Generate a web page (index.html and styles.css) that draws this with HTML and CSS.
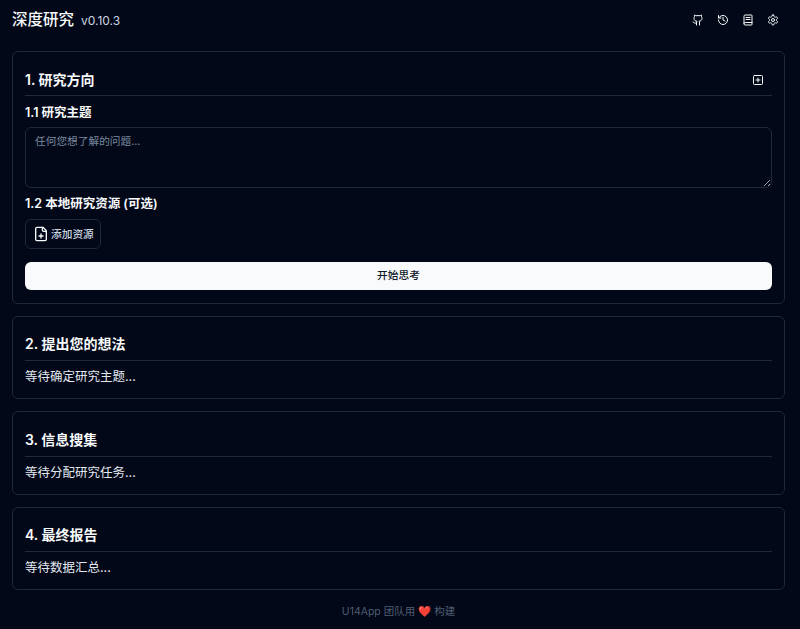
FILE: index.html
```html
<!DOCTYPE html>
<html lang="zh">
<head>
<meta charset="utf-8">
<title>深度研究</title>
<link rel="stylesheet" href="styles.css">
</head>
<body>
<div class="page">
  <header class="topbar">
    <h1 class="brand">深度研究<small class="version">v0.10.3</small></h1>
    <div class="tools">
      <svg class="icon" viewBox="0 0 24 24"><path d="M15 22v-4a4.8 4.8 0 0 0-1-3.5c3 0 6-2 6-5.500.08-1.250-.27-2.480-1-3.500.28-1.150.28-2.350 0-3.500 0 0-1 0-3 1.500-2.640-.5-5.360-.5-8 0C6 2 5 2 5 2c-.3 1.150-.3 2.350 0 3.500A5.400 5.400 0 0 0 4 9c0 3.500 3 5.500 6 5.500-.39.490-.68 1.050-.85 1.650-.17.600-.22 1.230-.15 1.850v4"/><path d="M9 18c-4.510 2-5-2-7-2"/></svg>
      <svg class="icon" viewBox="0 0 24 24"><path d="M3 12a9 9 0 1 0 9-9 9.750 9.750 0 0 0-6.740 2.740L3 8"/><path d="M3 3v5h5"/><path d="M12 7v5l4 2"/></svg>
      <svg class="icon" viewBox="0 0 24 24"><path d="M4 19.500v-15A2.500 2.500 0 0 1 6.500 2H19a1 1 0 0 1 1 1v18a1 1 0 0 1-1 1H6.500a1 1 0 0 1 0-5H20"/><path d="M8 7h8"/><path d="M8 11h8"/></svg>
      <svg class="icon" viewBox="0 0 24 24"><path d="M12.220 2h-.44a2 2 0 0 0-2 2v.18a2 2 0 0 1-1 1.730l-.43.250a2 2 0 0 1-2 0l-.15-.08a2 2 0 0 0-2.730.73l-.22.380a2 2 0 0 0 .73 2.730l.15.100a2 2 0 0 1 1 1.720v.510a2 2 0 0 1-1 1.740l-.15.090a2 2 0 0 0-.73 2.730l.22.380a2 2 0 0 0 2.730.730l.15-.08a2 2 0 0 1 2 0l.43.250a2 2 0 0 1 1 1.730V20a2 2 0 0 0 2 2h.44a2 2 0 0 0 2-2v-.18a2 2 0 0 1 1-1.730l.43-.250a2 2 0 0 1 2 0l.15.080a2 2 0 0 0 2.730-.730l.22-.390a2 2 0 0 0-.73-2.730l-.15-.080a2 2 0 0 1-1-1.740v-.500a2 2 0 0 1 1-1.740l.15-.090a2 2 0 0 0 .73-2.730l-.22-.380a2 2 0 0 0-2.730-.730l-.15.080a2 2 0 0 1-2 0l-.43-.250a2 2 0 0 1-1-1.730V4a2 2 0 0 0-2-2z"/><circle cx="12" cy="12" r="3"/></svg>
    </div>
  </header>

  <main class="cards">
    <section class="card">
      <div class="card-head head-first">
        <h2 class="card-title">1. 研究方向</h2>
        <svg class="icon" viewBox="0 0 24 24"><rect x="3" y="3" width="18" height="18" rx="2"/><path d="M8 12h8"/><path d="M12 8v8"/></svg>
      </div>
      <label class="label">1.1 研究主题</label>
      <textarea class="topic" placeholder="任何您想了解的问题..."></textarea>
      <label class="label label-second">1.2 本地研究资源 (可选)</label>
      <button class="add-btn" type="button">
        <svg class="file-icon" viewBox="0 0 24 24"><path d="M15 2H6a2 2 0 0 0-2 2v16a2 2 0 0 0 2 2h12a2 2 0 0 0 2-2V7Z"/><path d="M14 2v4a2 2 0 0 0 2 2h4"/><path d="M9 15h6"/><path d="M12 18v-6"/></svg>
        <span class="add-text">添加资源</span>
      </button>
      <button class="start-btn" type="button">开始思考</button>
    </section>

    <section class="card">
      <div class="card-head"><h2 class="card-title">2. 提出您的想法</h2></div>
      <p class="waiting">等待确定研究主题...</p>
    </section>

    <section class="card">
      <div class="card-head"><h2 class="card-title">3. 信息搜集</h2></div>
      <p class="waiting">等待分配研究任务...</p>
    </section>

    <section class="card">
      <div class="card-head"><h2 class="card-title">4. 最终报告</h2></div>
      <p class="waiting">等待数据汇总...</p>
    </section>
  </main>

  <footer class="footer">U14App 团队用 ❤️ 构建</footer>
</div>
</body>
</html>
```
FILE: styles.css
```css
* { box-sizing: border-box; }
html, body { margin: 0; height: 100%; overflow: hidden; }
body {
  background: #020817;
  color: #f8fafc;
  font-family: Inter, "Noto Sans CJK SC", sans-serif;
  font-size: 14px;
}
.page { width: 797px; padding: 0 12px; }
.topbar {
  height: 40px;
  display: flex;
  align-items: center;
  justify-content: space-between;
}
.brand { margin: 0; font-size: 15.500px; font-weight: 500; line-height: 20px; }
.version { margin-left: 7px; font-size: 12px; font-weight: 400; color: #cbd5e1; }
.tools { display: flex; gap: 13px; padding-right: 6px; }
.icon { width: 12px; height: 12px; fill: none; stroke: #f8fafc; stroke-width: 2; stroke-linecap: round; stroke-linejoin: round; flex: none; }
.cards { margin-top: 11px; display: flex; flex-direction: column; gap: 12px; }
.card { border: 1px solid #1e293b; border-radius: 6px; padding: 12px; }
.card-head {
  height: 32.500px;
  display: flex;
  align-items: center;
  justify-content: space-between;
  border-bottom: 1px solid #1e293b;
  padding-right: 8px;
}
.head-first { height: 32px; }
.card-title { margin: 0; font-size: 14px; font-weight: 600; line-height: 20px; }
.label { display: block; font-size: 12.500px; font-weight: 600; line-height: 16px; margin-top: 9px; }
.label-second { margin-top: 8px; }
.topic {
  display: block;
  width: 100%;
  height: 61px;
  margin-top: 6px;
  padding: 6px 9px;
  background: transparent;
  border: 1px solid #1e293b;
  border-radius: 6px;
  color: #f8fafc;
  font: 10.700px/16px Inter, "Noto Sans CJK SC", sans-serif;
}
.topic::placeholder { color: #7b8aa0; }
.add-btn {
  display: flex;
  align-items: center;
  gap: 2px;
  width: 76px;
  height: 30px;
  margin-top: 7px;
  padding: 0 7px 1px;
  background: transparent;
  border: 1px solid #1e293b;
  border-radius: 6px;
  color: #cbd5e1;
  font: 500 10.700px Inter, "Noto Sans CJK SC", sans-serif;
}
.add-text { white-space: nowrap; }
.file-icon { width: 16px; height: 16px; fill: none; stroke: #f8fafc; stroke-width: 2; stroke-linecap: round; stroke-linejoin: round; flex: none; }
.start-btn {
  display: block;
  width: 100%;
  height: 27.500px;
  margin: 13px 0 1px;
  padding: 0 0 2px;
  background: #f8fafc;
  border: 0;
  border-radius: 6px;
  color: #0f172a;
  font: 500 10.700px Inter, "Noto Sans CJK SC", sans-serif;
}
.waiting { margin: 7px 0 0.500px; font-size: 12.500px; line-height: 17.500px; color: #e2e8f0; }
.footer { margin-top: 14px; text-align: center; font-size: 10.500px; line-height: 16px; color: #4f5d72; }
```
